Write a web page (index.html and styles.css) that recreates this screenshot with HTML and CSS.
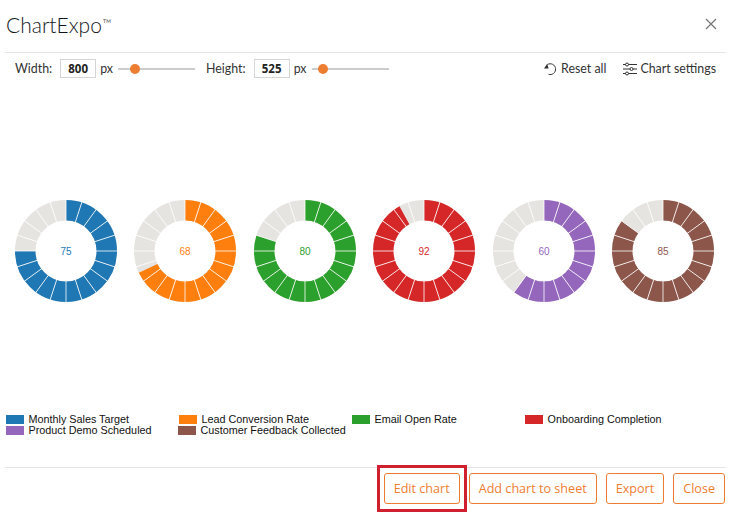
FILE: index.html
```html
<!DOCTYPE html>
<html lang="en">
<head>
    <meta charset="UTF-8">
    <meta name="viewport" content="width=device-width, initial-scale=1.0">
    <title>ChartExpo</title>
    <link rel="stylesheet" href="styles.css">
</head>
<body>
    <svg class="defs" width="0" height="0">
        <defs>
            <!-- white separators, 20 slices per ring -->
            <g id="spokes">
                <line x1="55" y1="0" x2="55" y2="110"/>
                <line x1="55" y1="0" x2="55" y2="110" transform="rotate(18 55 55)"/>
                <line x1="55" y1="0" x2="55" y2="110" transform="rotate(36 55 55)"/>
                <line x1="55" y1="0" x2="55" y2="110" transform="rotate(54 55 55)"/>
                <line x1="55" y1="0" x2="55" y2="110" transform="rotate(72 55 55)"/>
                <line x1="55" y1="0" x2="55" y2="110" transform="rotate(90 55 55)"/>
                <line x1="55" y1="0" x2="55" y2="110" transform="rotate(108 55 55)"/>
                <line x1="55" y1="0" x2="55" y2="110" transform="rotate(126 55 55)"/>
                <line x1="55" y1="0" x2="55" y2="110" transform="rotate(144 55 55)"/>
                <line x1="55" y1="0" x2="55" y2="110" transform="rotate(162 55 55)"/>
            </g>
        </defs>
    </svg>

    <div class="dialog">
        <header class="dialog-header">
            <h1>ChartExpo<span class="tm">™</span></h1>
            <button class="close-x" aria-label="Close">
                <svg width="12" height="12" viewBox="0 0 12 12"><path d="M1 1l10 10M11 1L1 11"/></svg>
            </button>
        </header>

        <div class="toolbar">
            <div class="size-controls">
                <label for="chart-width">Width:</label>
                <input type="text" id="chart-width" class="size-input" value="800">
                <span class="unit">px</span>
                <input type="range" class="slider" min="0" max="100" value="18" aria-label="Width slider">
                <label for="chart-height" class="height-label">Height:</label>
                <input type="text" id="chart-height" class="size-input" value="525">
                <span class="unit">px</span>
                <input type="range" class="slider" min="0" max="100" value="9" aria-label="Height slider">
            </div>
            <div class="tools">
                <a class="tool">
                    <svg width="14" height="14" viewBox="0 0 14 14">
                        <path class="line" d="M3.500 2.500A5.400 5.400 0 1 1 4.500 12.300"/>
                        <path class="head" d="M0 6.500L4.600 6.500L3.200 1.800Z"/>
                    </svg>
                    Reset all
                </a>
                <a class="tool">
                    <svg width="14" height="14" viewBox="0 0 14 14">
                        <path class="line" d="M0 2.500h2.500M5.500 2.500h8.500M0 7h7M10 7h4M0 11.500h2.500M5.500 11.500h8.500"/>
                        <circle class="line" cx="4" cy="2.500" r="1.500"/>
                        <circle class="line" cx="8.500" cy="7" r="1.500"/>
                        <circle class="line" cx="4" cy="11.500" r="1.500"/>
                    </svg>
                    Chart settings
                </a>
            </div>
        </div>

        <main class="charts">
            <svg class="donut blue" viewBox="0 0 110 110" width="110" height="110">
                <circle class="track" cx="55" cy="55" r="40.75"/>
                <circle class="value" cx="55" cy="55" r="40.75" pathLength="100" stroke-dasharray="75 100" transform="rotate(-90 55 55)"/>
                <use href="#spokes" class="spokes"/>
                <text x="55" y="58.500">75</text>
            </svg>
            <svg class="donut orange" viewBox="0 0 110 110" width="110" height="110">
                <circle class="track" cx="55" cy="55" r="40.75"/>
                <circle class="value" cx="55" cy="55" r="40.75" pathLength="100" stroke-dasharray="68 100" transform="rotate(-90 55 55)"/>
                <use href="#spokes" class="spokes"/>
                <text x="55" y="58.500">68</text>
            </svg>
            <svg class="donut green" viewBox="0 0 110 110" width="110" height="110">
                <circle class="track" cx="55" cy="55" r="40.75"/>
                <circle class="value" cx="55" cy="55" r="40.75" pathLength="100" stroke-dasharray="80 100" transform="rotate(-90 55 55)"/>
                <use href="#spokes" class="spokes"/>
                <text x="55" y="58.500">80</text>
            </svg>
            <svg class="donut red" viewBox="0 0 110 110" width="110" height="110">
                <circle class="track" cx="55" cy="55" r="40.75"/>
                <circle class="value" cx="55" cy="55" r="40.75" pathLength="100" stroke-dasharray="92 100" transform="rotate(-90 55 55)"/>
                <use href="#spokes" class="spokes"/>
                <text x="55" y="58.500">92</text>
            </svg>
            <svg class="donut purple" viewBox="0 0 110 110" width="110" height="110">
                <circle class="track" cx="55" cy="55" r="40.75"/>
                <circle class="value" cx="55" cy="55" r="40.75" pathLength="100" stroke-dasharray="60 100" transform="rotate(-90 55 55)"/>
                <use href="#spokes" class="spokes"/>
                <text x="55" y="58.500">60</text>
            </svg>
            <svg class="donut brown" viewBox="0 0 110 110" width="110" height="110">
                <circle class="track" cx="55" cy="55" r="40.75"/>
                <circle class="value" cx="55" cy="55" r="40.75" pathLength="100" stroke-dasharray="85 100" transform="rotate(-90 55 55)"/>
                <use href="#spokes" class="spokes"/>
                <text x="55" y="58.500">85</text>
            </svg>
        </main>

        <ul class="legend">
            <li class="blue"><i></i>Monthly Sales Target</li>
            <li class="orange"><i></i>Lead Conversion Rate</li>
            <li class="green"><i></i>Email Open Rate</li>
            <li class="red"><i></i>Onboarding Completion</li>
            <li class="purple"><i></i>Product Demo Scheduled</li>
            <li class="brown nudge"><i></i>Customer Feedback Collected</li>
        </ul>

        <footer class="dialog-footer">
            <button class="btn btn-marked">Edit chart</button>
            <button class="btn">Add chart to sheet</button>
            <button class="btn">Export</button>
            <button class="btn">Close</button>
        </footer>
    </div>
</body>
</html>
```

FILE: styles.css
```css
:root {
    --accent: #ed7d31;
    --line-color: #e6e6e6;
    --text-color: #333;
}

html, body {
    margin: 0;
    background-color: white;
}

body {
    font-family: "Lato", "Open Sans", sans-serif;
    font-size: 12.4px;
    color: var(--text-color);
    overflow: hidden;
}

.defs {
    position: absolute;
}

.dialog {
    width: 721px;
    height: 530px;
    margin-left: 5px;
}

.dialog-header {
    display: flex;
    justify-content: space-between;
    align-items: center;
    height: 48px;
    padding: 0 9px 4px 1px;
    border-bottom: 1px solid var(--line-color);
}

h1 {
    margin: 0;
    font-family: "Lato", sans-serif;
    font-size: 21px;
    font-weight: 300;
    color: #14181c;
}

.tm {
    margin-left: 1px;
    font-size: 12px;
    vertical-align: 5px;
}

.close-x {
    display: flex;
    padding: 0;
    border: none;
    background: none;
}

.close-x path {
    fill: none;
    stroke: #777;
    stroke-width: 1.3;
}

.toolbar {
    display: flex;
    justify-content: space-between;
    align-items: center;
    height: 31px;
    padding: 0 10px;
}

.size-controls, .tools, .tool {
    display: flex;
    align-items: center;
}

.size-input {
    width: 36px;
    height: 19px;
    margin-left: 8px;
    padding: 0;
    box-sizing: border-box;
    border: 1px solid #d5d5d5;
    font-family: "Open Sans", sans-serif;
    font-size: 11.5px;
    font-weight: 700;
    color: #222;
    text-align: center;
}

.unit {
    margin-left: 4px;
}

.slider {
    width: 77px;
    height: 10px;
    margin: 0 0 0 5px;
    background: transparent;
    appearance: none;
}

.slider::-webkit-slider-runnable-track {
    height: 2px;
    background-color: #ccc;
}

.slider::-webkit-slider-thumb {
    width: 10px;
    height: 10px;
    margin-top: -4px;
    border-radius: 50%;
    background-color: var(--accent);
    appearance: none;
}

.height-label {
    margin-left: 11px;
}

.tools {
    gap: 17px;
}

.tool {
    gap: 3px;
}

.tool svg {
    flex: none;
}

.tool .line {
    fill: none;
    stroke: #333;
    stroke-width: 1;
}

.tool .head {
    fill: #333;
}

.charts {
    display: grid;
    grid-template-columns: repeat(6, 1fr);
    justify-items: center;
    align-items: center;
    height: 326px;
    padding: 4px 3px 0 1px;
}

.donut {
    display: block;
}

.donut circle {
    fill: none;
    stroke-width: 20.5;
}

.donut .track {
    stroke: #e6e4e0;
}

.donut .value {
    stroke: var(--series);
}

.spokes {
    stroke: white;
    stroke-width: 0.8;
}

.donut text {
    font-family: "Liberation Sans", Arial, sans-serif;
    font-size: 10px;
    text-anchor: middle;
    fill: var(--series);
}

.blue { --series: #1f77b4; }
.orange { --series: #ff7f0e; }
.green { --series: #2ca02c; }
.red { --series: #d62728; }
.purple { --series: #9467bd; }
.brown { --series: #8c564b; }

.legend {
    display: grid;
    grid-template-columns: repeat(4, 173px);
    grid-auto-rows: 11px;
    height: 53px;
    margin: 0;
    padding: 0 0 0 1px;
    box-sizing: border-box;
    list-style: none;
    font-family: "Liberation Sans", Arial, sans-serif;
    font-size: 10.8px;
    line-height: 11px;
    color: #111;
}

.legend li {
    display: flex;
    align-items: center;
    white-space: nowrap;
}

.legend i {
    width: 18px;
    height: 9px;
    margin-right: 4.5px;
    background-color: var(--series);
}

.legend .nudge {
    margin-left: -1px;
}

.dialog-footer {
    display: flex;
    justify-content: flex-end;
    gap: 9px;
    padding-top: 5px;
    padding-right: 1px;
    border-top: 1px solid var(--line-color);
}

.btn {
    height: 31px;
    padding: 0 9px;
    border: 1px solid var(--accent);
    border-radius: 3px;
    background-color: white;
    font-family: "Open Sans", sans-serif;
    font-size: 12.6px;
    color: var(--accent);
}

/* red marker box drawn over the screenshot */
.btn-marked {
    position: relative;
}

.btn-marked::after {
    content: "";
    position: absolute;
    inset: -9px -8px;
    border: 3px solid #d01f2e;
}
```
